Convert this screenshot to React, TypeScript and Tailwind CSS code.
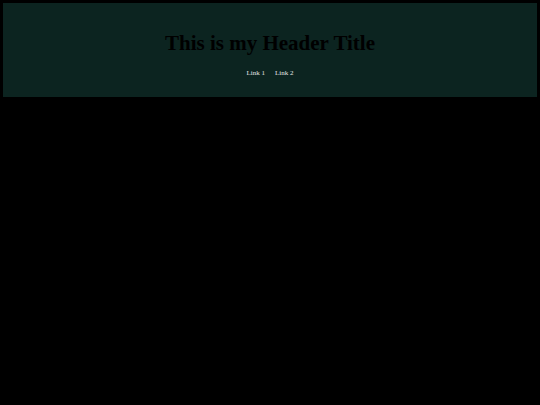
export default function App() {
  return (
    <div className="min-h-screen w-full bg-black p-[3px]" style={{ fontFamily: '"Liberation Serif", serif' }}>
      <header className="flex h-[94px] flex-col items-center bg-[#0c2420] pt-[27px]">
        <h1 className="text-[21px] font-bold leading-[26px] text-black">This is my Header Title</h1>
        <nav className="mt-[12px] flex gap-[10px] text-[7px] leading-[10px] text-[#e6e6e6]">
          <a>Link 1</a>
          <a>Link 2</a>
        </nav>
      </header>
    </div>
  );
}
